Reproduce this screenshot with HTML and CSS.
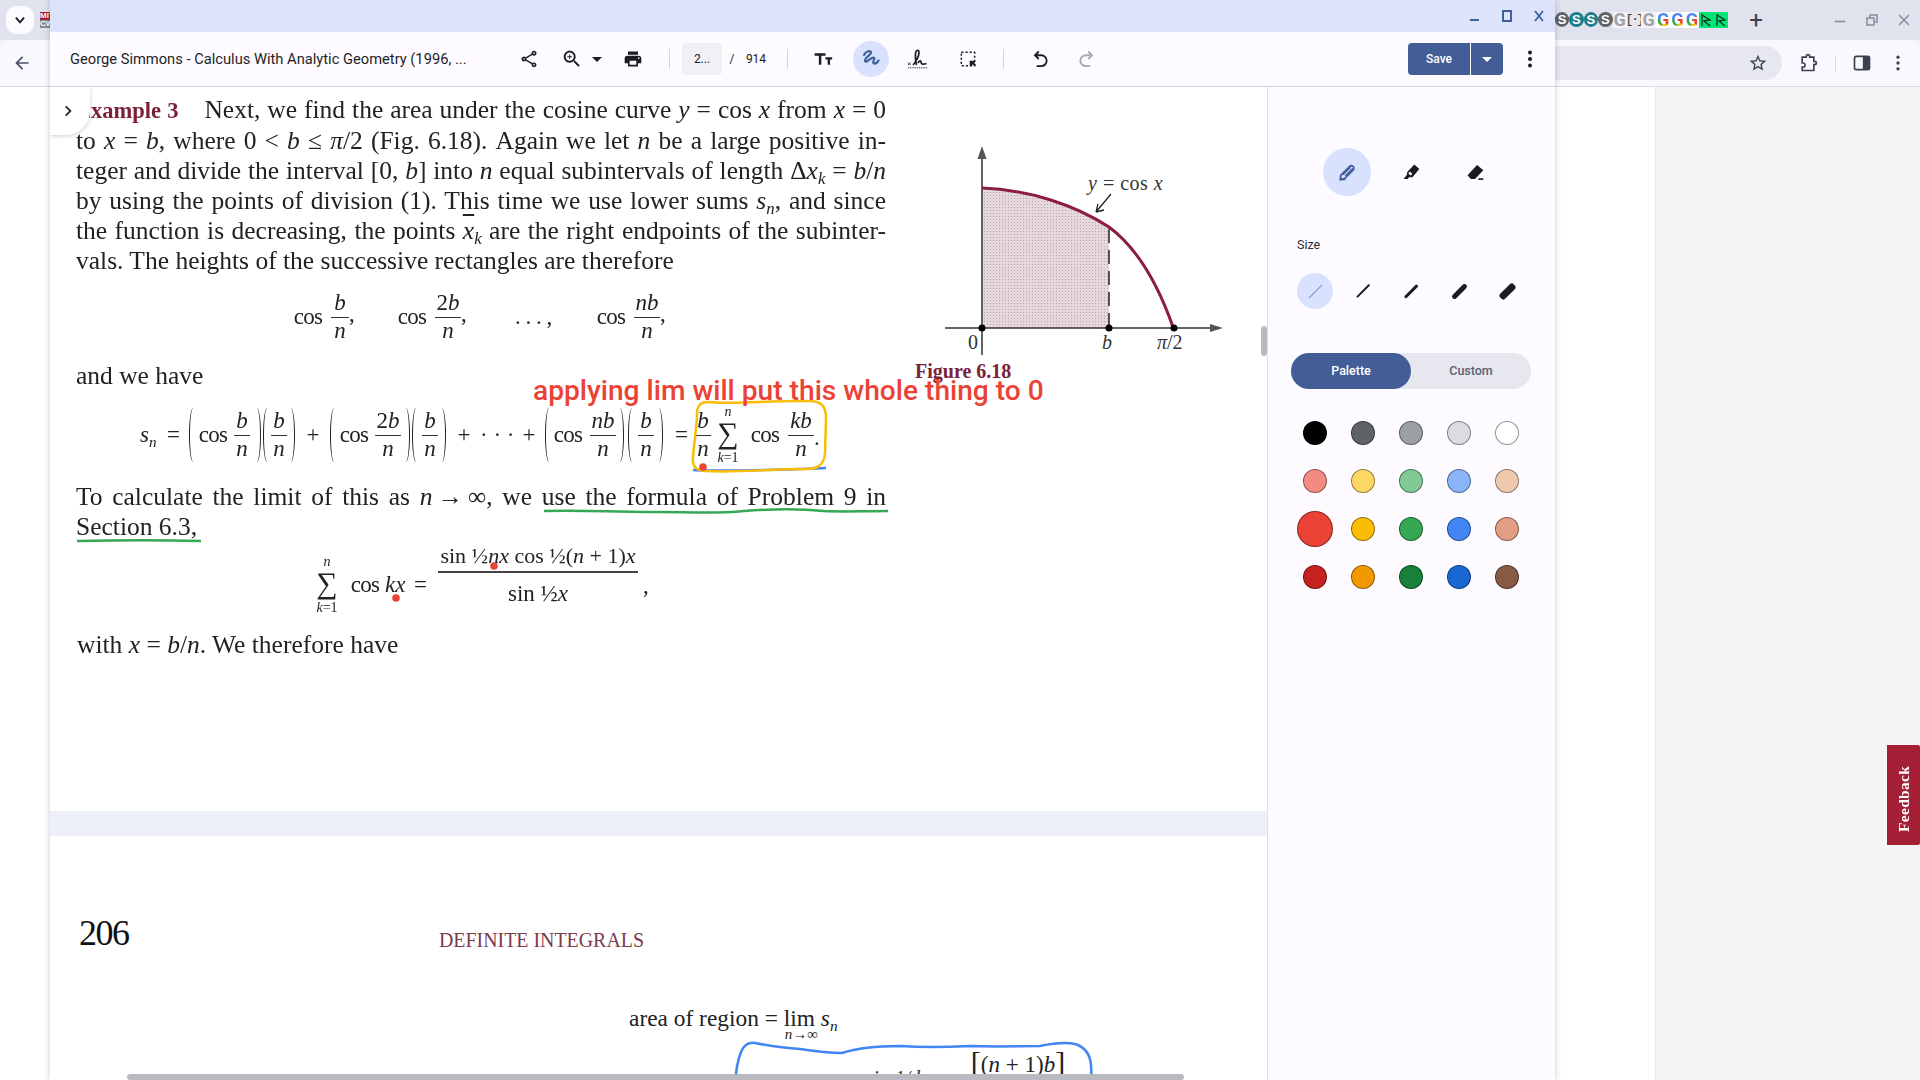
FILE: index.html
```html
<!DOCTYPE html>
<html lang="en">
<head>
<meta charset="utf-8">
<title>Calculus With Analytic Geometry</title>
<link rel="stylesheet" href="styles.css">
</head>
<body>
<div class="browser">
  <header class="tabstrip">
    <div class="tab-search"><svg class="i14" viewBox="0 0 24 24"><path d="M5 8l7 8 7-8" fill="none" stroke="#1f1f2a" stroke-width="3.4"/></svg></div>
    <div class="fav-left"><span class="fav-red">MIT</span><span class="fav-grey">CW</span></div>
    <div class="fill"></div>
    <div class="favs">
      <span class="f f-grey">S</span><span class="f f-grey">S</span><span class="f f-teal">S</span><span class="f f-teal">S</span><span class="f f-grey">S</span>
      <span class="f f-gg">G</span><span class="f f-br">[·}</span><span class="f f-gg">G</span>
      <span class="f f-g">G</span><span class="f f-g">G</span><span class="f f-g">G</span>
      <span class="f f-n">
        <svg class="i14" viewBox="0 0 14 14"><path d="M3 1v12M3 2l8 5-6 1 6 5" fill="none" stroke="#103020" stroke-width="1.3"/></svg>
      </span>
      <span class="f f-n">
        <svg class="i14" viewBox="0 0 14 14"><path d="M3 1v12M3 2l8 5-6 1 6 5" fill="none" stroke="#103020" stroke-width="1.3"/></svg>
      </span>
    </div>
    <div class="new-tab">+</div>
    <div class="win-ctl">
      <svg class="i16" viewBox="0 0 16 16"><path d="M3 9.5h10" stroke="#8a8d9c" stroke-width="1.6"/></svg>
      <svg class="i16" viewBox="0 0 16 16"><path d="M3 6h7v7H3zM6 6V3h7v7h-3" fill="none" stroke="#8a8d9c" stroke-width="1.5"/></svg>
      <svg class="i16" viewBox="0 0 16 16"><path d="M3 3l10 10M13 3L3 13" stroke="#8a8d9c" stroke-width="1.6"/></svg>
    </div>
  </header>
  <div class="chrome-bar">
    <svg class="back" viewBox="0 0 24 24"><path d="M20 11H7.8l5.6-5.6L12 4l-8 8 8 8 1.4-1.4L7.8 13H20z" fill="#4a5068"/></svg>
    <div class="fill"></div>
    <div class="omni">
      <svg class="i20" viewBox="0 0 24 24"><path d="M22 9.24l-7.19-.62L12 2 9.19 8.63 2 9.24l5.46 4.73L5.82 21 12 17.27 18.18 21l-1.63-7.03L22 9.24zM12 15.4l-3.76 2.27 1-4.28-3.32-2.88 4.38-.38L12 6.1l1.71 4.04 4.38.38-3.32 2.88 1 4.28L12 15.4z" fill="#3c4150"/></svg>
    </div>
    <svg class="i20 ext" viewBox="0 0 24 24"><path d="M5 5h5V4a2 2 0 0 1 4 0v1h5v5h1a2 2 0 0 1 0 4h-1v7H5v-4h1a2.500 2.500 0 0 0 0-5H5z" fill="none" stroke="#3c4150" stroke-width="2"/></svg>
    <span class="bar-sep"></span>
    <svg class="i20 side" viewBox="0 0 24 24"><rect x="3" y="4" width="18" height="16" rx="2" fill="none" stroke="#3c4150" stroke-width="2"/><rect x="13" y="4" width="8" height="16" fill="#3c4150"/></svg>
    <svg class="i20 dots" viewBox="0 0 24 24"><circle cx="12" cy="5" r="2" fill="#3c4150"/><circle cx="12" cy="12" r="2" fill="#3c4150"/><circle cx="12" cy="19" r="2" fill="#3c4150"/></svg>
  </div>
  <main class="site">
    <div class="site-white"></div>
    <div class="feedback">Feedback</div>
  </main>
</div>

<section class="window">
  <div class="titlebar">
    <button class="tb-ctl"><svg class="i16" viewBox="0 0 16 16"><path d="M3 12h9" stroke="#41609b" stroke-width="2"/></svg></button>
    <button class="tb-ctl"><svg class="i16" viewBox="0 0 16 16"><path d="M4 3h8v10H4z" fill="none" stroke="#41609b" stroke-width="2"/></svg></button>
    <button class="tb-ctl"><svg class="i16" viewBox="0 0 16 16"><path d="M4 3l8 10M12 3L4 13" stroke="#41609b" stroke-width="1.800"/></svg></button>
  </div>
  <div class="toolbar">
    <div class="doc-title">George Simmons - Calculus With Analytic Geometry (1996, ...</div>
    <button class="ic"><svg class="i20" viewBox="0 0 24 24"><path d="M18 16.080c-.76 0-1.440.3-1.960.77L8.910 12.700c.05-.23.09-.46.09-.7s-.04-.47-.09-.7l7.050-4.110c.54.5 1.250.81 2.040.81 1.660 0 3-1.340 3-3s-1.340-3-3-3-3 1.340-3 3c0 .24.04.47.09.7L8.040 9.810C7.500 9.310 6.790 9 6 9c-1.660 0-3 1.340-3 3s1.340 3 3 3c.79 0 1.500-.31 2.040-.81l7.120 4.160c-.05.21-.08.43-.08.65 0 1.610 1.310 2.920 2.920 2.920 1.610 0 2.920-1.310 2.920-2.920s-1.310-2.920-2.920-2.920zM18 4c.55 0 1 .45 1 1s-.45 1-1 1-1-.45-1-1 .45-1 1-1zM6 13c-.55 0-1-.45-1-1s.45-1 1-1 1 .45 1 1-.45 1-1 1zm12 7.020c-.55 0-1-.45-1-1s.45-1 1-1 1 .45 1 1-.45 1-1 1z" fill="#1d1b20"/></svg></button>
    <button class="ic m7"><svg class="i22" viewBox="0 0 24 24"><path d="M15.500 14h-.79l-.28-.27C15.410 12.590 16 11.110 16 9.500 16 5.910 13.090 3 9.500 3S3 5.910 3 9.500 5.910 16 9.500 16c1.610 0 3.090-.59 4.230-1.570l.27.28v.79l5 4.990L20.490 19l-4.990-5zm-6 0C7.010 14 5 11.990 5 9.500S7.010 5 9.500 5 14 7.010 14 9.500 11.990 14 9.500 14z" fill="#1d1b20"/><path d="M12 10h-2v2H9v-2H7V9h2V7h1v2h2z" fill="#1d1b20"/></svg></button>
    <span class="caret"></span>
    <button class="ic m11"><svg class="i20" viewBox="0 0 24 24"><path d="M19 8H5c-1.660 0-3 1.340-3 3v6h4v4h12v-4h4v-6c0-1.660-1.340-3-3-3zm-3 11H8v-5h8v5zm3-7c-.55 0-1-.45-1-1s.45-1 1-1 1 .45 1 1-.45 1-1 1zm-1-9H6v4h12V3z" fill="#1d1b20"/></svg></button>
    <span class="sep m18"></span>
    <div class="page-input m12">2...</div>
    <span class="page-slash m5">/</span>
    <span class="page-total m4">914</span>
    <span class="sep m16"></span>
    <button class="ic m17"><svg class="i20" viewBox="0 0 24 24"><path d="M2 5h13v3h-5v11H7V8H2zM15 10h8v2.500h-2.600V19h-2.800v-6.500H15z" fill="#1d1b20"/></svg></button>
    <button class="ic ink m12"><svg class="i24" viewBox="0 0 24 24"><path d="M5 8c2-4 7-5 7-2.500S5 11 6 14c1 2.500 6-3.500 8.500-3.500 2.500 0-2 5.500.5 6 2 .3 3.500-1 4.500-3" fill="none" stroke="#41609b" stroke-width="2.200" stroke-linecap="round"/></svg></button>
    <button class="ic m11"><svg class="i24" viewBox="0 0 24 24"><path d="M2 15.500l2.600 2.600M4.600 15.500L2 18.100" stroke="#1d1b20" stroke-width=".9"/><path d="M7 18C10 15 13 9 13 5.500c0-2.800-2.800-2.800-3.300 0-.6 3 0 8.500.8 12.500M12 16c1-1.800 3-3.200 3-.8 0 2.300 2.500 2.300 5.500 1.300" fill="none" stroke="#1d1b20" stroke-width="1.700"/><path d="M2 20.800h20" stroke="#1d1b20" stroke-width="1" stroke-dasharray="1.200 1"/></svg></button>
    <button class="ic m14"><svg class="i20" viewBox="0 0 24 24"><path d="M4 4h16v16H4z" fill="none" stroke="#1d1b20" stroke-width="1.800" stroke-dasharray="2.600 2.400"/><path d="M14 14h6.500v2.500l-1.700-.2 2.700 2.700-1.800 1.800-2.700-2.700.2 1.900H14z" fill="#1d1b20"/></svg></button>
    <span class="sep m17"></span>
    <button class="ic m18"><svg class="i20" viewBox="0 0 24 24"><path d="M10.500 3L6 7.500l4.500 4.500M6 7.500h7.500a6 6 0 0 1 0 13H8" fill="none" stroke="#1d1b20" stroke-width="2.200"/></svg></button>
    <button class="ic m11"><svg class="i20" viewBox="0 0 24 24"><path d="M13.500 3L18 7.500 13.500 12M18 7.500h-7.500a6 6 0 0 0 0 13H16" fill="none" stroke="#a9a9ae" stroke-width="2.200"/></svg></button>
    <div class="fill"></div>
    <div class="save">Save</div>
    <div class="save-arrow"><span class="caret caret-w"></span></div>
    <button class="ic m9"><svg class="i24" viewBox="0 0 24 24"><circle cx="12" cy="5.500" r="2" fill="#1d1b20"/><circle cx="12" cy="12" r="2" fill="#1d1b20"/><circle cx="12" cy="18.500" r="2" fill="#1d1b20"/></svg></button>
  </div>

  <div class="main">
    <div class="viewer">
      <article class="page one">
        <div class="para p-a">
          <div class="j"><b class="ex">Example 3</b>Next, we find the area under the cosine curve <i>y</i> = cos <i>x</i> from <i>x</i> = 0</div>
          <div class="j">to <i>x</i> = <i>b</i>, where 0 &lt; <i>b</i> ≤ <i>π</i>/2 (Fig. 6.18). Again we let <i>n</i> be a large positive in-</div>
          <div class="j">teger and divide the interval [0, <i>b</i>] into <i>n</i> equal subintervals of length Δ<i>x<sub>k</sub></i> = <i>b</i>/<i>n</i></div>
          <div class="j">by using the points of division (1). This time we use lower sums <i>s<sub>n</sub></i>, and since</div>
          <div class="j">the function is decreasing, the points <i class="over">x</i><i><sub>k</sub></i> are the right endpoints of the subinter-</div>
          <div>vals. The heights of the successive rectangles are therefore</div>
        </div>

        <div class="eq eq-cos">
          <span class="cos">cos</span><span class="fr m8"><i>b</i><i>n</i></span><span class="punct">,</span>
          <span class="cos m42">cos</span><span class="fr fr2 m8"><i><span class="up">2</span>b</i><i>n</i></span><span class="punct">,</span>
          <span class="ell m48">. . . ,</span>
          <span class="cos m47">cos</span><span class="fr fr2 m8"><i>nb</i><i>n</i></span><span class="punct">,</span>
        </div>

        <div class="para p-b">and we have</div>

        <div class="eq eq-sum">
          <i class="sn">s<sub>n</sub></i>
          <span class="op m10">=</span>
          <span class="lp m10"></span>
          <span class="cos m1">cos</span>
          <span class="fr m6"><i>b</i><i>n</i></span>
          <span class="rp m3"></span><span class="lp m2"></span>
          <span class="fr"><i>b</i><i>n</i></span>
          <span class="rp"></span>
          <span class="op plus m11">+</span>
          <span class="lp m10"></span>
          <span class="cos m1">cos</span>
          <span class="fr fr2 m6"><i><span class="up">2</span>b</i><i>n</i></span>
          <span class="rp m1"></span><span class="lp m2"></span>
          <span class="fr m2"><i>b</i><i>n</i></span>
          <span class="rp"></span>
          <span class="op plus m11">+</span>
          <span class="dots3 m9">· · ·</span>
          <span class="op plus m8">+</span>
          <span class="lp m9"></span>
          <span class="cos">cos</span>
          <span class="fr fr2 m7"><i>nb</i><i>n</i></span>
          <span class="rp"></span><span class="lp m4"></span>
          <span class="fr m2"><i>b</i><i>n</i></span>
          <span class="rp m1"></span>
          <span class="op m12">=</span>
          <span class="fr m8"><i>b</i><i>n</i></span>
          <span class="sum m4"><i>n</i><b>∑</b><i><em>k</em>=1</i></span>
          <span class="cos m9">cos</span>
          <span class="fr fr2 m8"><i>kb</i><i>n</i></span>
          <span class="punct">.</span>
        </div>

        <div class="para p-c">
          <div class="j">To calculate the limit of this as <i>n</i>&thinsp;→&thinsp;∞, we use the formula of Problem 9 in</div>
          <div>Section 6.3,</div>
        </div>

        <div class="eq eq-lim">
          <span class="sum sum-l"><i>n</i><b>∑</b><i><em>k</em>=1</i></span>
          <span class="cos m8">cos</span>
          <i class="kx m5">kx</i>
          <span class="op m9">=</span>
          <span class="big-frac m12"><span class="bf-n">sin ½<i>nx</i> cos ½(<i>n</i> + 1)<i>x</i></span><span class="bf-d">sin ½<i>x</i></span></span>
          <span class="punct comma-l m5">,</span>
        </div>

        <div class="para p-d">with <i>x</i> = <i>b</i>/<i>n</i>. We therefore have</div>

        <svg class="figure" viewBox="930 140 300 250">
          <defs>
            <pattern id="stip" width="3" height="3" patternUnits="userSpaceOnUse">
              <rect width="3" height="3" fill="#e6d8dd"/>
              <rect width="1" height="1" fill="#b8a6ad"/>
            </pattern>
          </defs>
          <path d="M982 188C1030 190 1075 205 1109 227V328H982z" fill="url(#stip)"/>
          <path d="M982 150V355M945 328H1215" stroke="#333" stroke-width="1.500" fill="none"/>
          <path d="M982 146l-4.500 13h9zM1223 328l-13-4v8z" fill="#555"/>
          <path d="M1109 229V328" stroke="#222" stroke-width="1.500" stroke-dasharray="14 7"/>
          <path d="M982 188C1030 190 1075 205 1109 227C1140 250 1160 290 1173 327" fill="none" stroke="#8c1d3c" stroke-width="3"/>
          <circle cx="982" cy="328" r="3.500"/><circle cx="1109" cy="328" r="3.500"/><circle cx="1174" cy="328" r="3.500"/>
          <path d="M1111 194L1096 212M1096 212l2-8M1096 212l8-2" stroke="#222" stroke-width="1.300" fill="none"/>
          <text x="1088" y="190" class="fig-t fig-wide"><tspan font-style="italic">y</tspan> = cos <tspan font-style="italic">x</tspan></text>
          <text x="968" y="349" class="fig-t">0</text>
          <text x="1102" y="349" class="fig-t"><tspan font-style="italic">b</tspan></text>
          <text x="1157" y="349" class="fig-t"><tspan font-style="italic">π</tspan>/2</text>
        </svg>
        <div class="fig-cap">Figure 6.18</div>

        <svg class="ink-layer" viewBox="50 87 1217 724">
          <path d="M693 470c10 1 60 1 133-2" fill="none" stroke="#4285f4" stroke-width="2.500"/>
          <path d="M708 402c30 3 60-2 100-1 13 0 18 4 18 18l-1 34c-1 13-8 16-20 16-35 0-70 4-100 2-9-1-13-4-12-14 1-14 4-32 4-43 0-8 3-12 11-12z" fill="none" stroke="#fbbc04" stroke-width="2.500"/>
          <path d="M544 511c50-1 60 1 110 1s60 2 90-1c40-3 60-2 80 0 20 1 40 0 64 0" fill="none" stroke="#34a853" stroke-width="2.500"/>
          <path d="M77 541c40-1 90-1 124 0" fill="none" stroke="#34a853" stroke-width="2.500"/>
          <circle cx="703" cy="467" r="3.800" fill="#ea4335"/>
          <circle cx="494" cy="566" r="3.800" fill="#ea4335"/>
          <circle cx="396" cy="598" r="3.800" fill="#ea4335"/>
        </svg>
        <div class="red-note">applying lim will put this whole thing to 0</div>
      </article>

      <div class="page-gap"></div>

      <article class="page two">
        <div class="pg-num">206</div>
        <div class="pg-head">DEFINITE INTEGRALS</div>
        <div class="area">area of region = <span class="lim">lim<small><i>n</i>→∞</small></span> <i>s<sub>n</sub></i></div>
        <div class="cut-sin">sin ½<i>b</i> cos</div>
        <div class="cut-num"><span class="brk">[</span>(<i>n</i> + 1)<i>b</i><span class="brk">]</span></div>
        <svg class="ink-layer two-ink" viewBox="50 836 1217 244">
          <path d="M736 1085C735 1070 738 1060 741 1052C744 1045 748 1042 755 1043C770 1046 780 1048 800 1049C820 1052 830 1053 842 1053C860 1047 880 1046 900 1046C930 1048 950 1047 970 1046C1000 1047 1020 1046 1040 1046C1055 1043 1065 1042 1075 1044C1085 1047 1090 1054 1091 1065L1092 1085" fill="none" stroke="#4285f4" stroke-width="2.500"/>
        </svg>
      </article>

      <button class="rail-toggle"><svg class="i14" viewBox="0 0 24 24"><path d="M8 4l8 8-8 8" fill="none" stroke="#1d1b20" stroke-width="3"/></svg></button>
      <span class="scroll-v"></span>
      <span class="scroll-h"></span>
    </div>

    <aside class="panel">
      <div class="tools">
        <button class="tool on"><svg class="i20" viewBox="0 0 24 24"><path d="M4 21l.5-5L15 5.500a3 3 0 0 1 4.500 4L9 20zM7 15l9-9M10 17l9-9" fill="none" stroke="#41609b" stroke-width="2.200"/><path d="M4 21h6" stroke="#41609b" stroke-width="2"/></svg></button>
        <button class="tool"><svg class="i20" viewBox="0 0 24 24"><path d="M16 3l6 5.500-8.500 10-3.500-.5-2 2.500H3l4-5 .5-3.500z" fill="#1d1b20"/><path d="M10.500 11.500l3 2.700-1.800 2.100-3-2.600z" fill="#fff"/></svg></button>
        <button class="tool"><svg class="i20" viewBox="0 0 24 24"><path d="M14.500 3.500l7.500 6.500-10 10.500H7l-4-4.500z" fill="#1d1b20"/><path d="M16 20.500h6" stroke="#1d1b20" stroke-width="2"/></svg></button>
      </div>
      <div class="size-label">Size</div>
      <div class="sizes">
        <button class="size on"><span class="stroke s1"></span></button>
        <button class="size"><span class="stroke s2"></span></button>
        <button class="size"><span class="stroke s3"></span></button>
        <button class="size"><span class="stroke s4"></span></button>
        <button class="size"><span class="stroke s5"></span></button>
      </div>
      <div class="seg">
        <div class="seg-on">Palette</div>
        <div class="seg-off">Custom</div>
      </div>
      <div class="palette">
        <span class="c c01"></span><span class="c c02"></span><span class="c c03"></span><span class="c c04"></span><span class="c c05"></span>
        <span class="c c06"></span><span class="c c07"></span><span class="c c08"></span><span class="c c09"></span><span class="c c10"></span>
        <span class="c c11 sel"></span><span class="c c12"></span><span class="c c13"></span><span class="c c14"></span><span class="c c15"></span>
        <span class="c c16"></span><span class="c c17"></span><span class="c c18"></span><span class="c c19"></span><span class="c c20"></span>
      </div>
    </aside>
  </div>
</section>
</body>
</html>
```

FILE: styles.css
```css
* { box-sizing: border-box; }
html, body { margin: 0; height: 100%; overflow: hidden; }
body { width: 1920px; height: 1080px; position: relative; background: #f5f5f5; font-family: Roboto, "Liberation Sans", sans-serif; color: #1d1b20; }
button { border: 0; background: none; padding: 0; margin: 0; display: flex; align-items: center; justify-content: center; }
svg { display: block; }
.i14 { width: 14px; height: 14px; }
.i16 { width: 16px; height: 16px; }
.i20 { width: 20px; height: 20px; }
.i22 { width: 22px; height: 22px; }
.i24 { width: 24px; height: 24px; }
.fill { flex: 1; }

.m1 { margin-left: 1px; } .m2 { margin-left: 2px; } .m3 { margin-left: 3px; } .m4 { margin-left: 4px; }
.m5 { margin-left: 5px; } .m6 { margin-left: 6px; } .m7 { margin-left: 7px; } .m8 { margin-left: 8px; }
.m9 { margin-left: 9px; } .m10 { margin-left: 10px; } .m11 { margin-left: 11px; } .m12 { margin-left: 12px; }
.m14 { margin-left: 14px; } .m16 { margin-left: 16px; } .m17 { margin-left: 17px; } .m18 { margin-left: 18px; }
.m42 { margin-left: 42px; } .m47 { margin-left: 47px; } .m48 { margin-left: 48px; }

/* browser behind */
.browser { height: 1080px; display: flex; flex-direction: column; }
.tabstrip { height: 40px; background: #e0e2ee; display: flex; align-items: center; padding-left: 6px; }
.tab-search { width: 28px; height: 28px; background: #fbfbff; border-radius: 10px; display: flex; align-items: center; justify-content: center; }
.fav-left { width: 16px; height: 16px; margin-left: 6px; display: flex; flex-direction: column; font: bold 8px/8px "Liberation Sans", sans-serif; overflow: hidden; }
.fav-red { background: #a31f34; color: #fff; }
.fav-grey { background: #8a8b8c; color: #fff; }
.favs { display: flex; margin-right: 18px; }
.f { width: 14.450px; height: 16px; display: flex; align-items: center; justify-content: center; font: bold 13px/16px "Liberation Sans", sans-serif; }
.f-grey, .f-teal { border-radius: 50%; color: #fff; height: 15px; }
.f-grey { background: #5f6368; }
.f-teal { background: #1c7f8c; }
.f-gg { background: #f3f4f8; color: #a0a2a6; font: bold 18px/16px Roboto, sans-serif; }
.f-br { background: #e6e7ef; color: #333; font: 13px/16px "Liberation Mono", monospace; letter-spacing: -2px; }
.f-g { font: bold 18px/16px Roboto, sans-serif; color: transparent; background: conic-gradient(from 45deg, #ea4335 0 25%, #fbbc04 25% 40%, #34a853 40% 65%, #4285f4 65% 100%), linear-gradient(#fff, #fff); -webkit-background-clip: text, border-box; background-clip: text, border-box; }
.f-n { background: #00e676; }
.new-tab { width: 20px; text-align: center; font: 24px/24px Roboto, sans-serif; color: #3c4150; margin-right: 66px; }
.win-ctl { display: flex; gap: 16px; margin-right: 8px; }

.chrome-bar { height: 47px; background: #f8f8fe; border-top-left-radius: 14px; border-top-right-radius: 14px; border-bottom: 1px solid #dcdde6; display: flex; align-items: center; padding: 0 12px; }
.back { width: 20px; height: 20px; }
.omni { width: 235px; height: 34px; background: #e6e7f1; border-radius: 0 17px 17px 0; display: flex; align-items: center; justify-content: flex-end; padding-right: 14px; }
.ext { margin-left: 16px; }
.bar-sep { width: 1px; height: 16px; background: #d5dcf0; margin-left: 17px; }
.side { margin-left: 16px; }
.dots { margin-left: 16px; }

.site { flex: 1; display: flex; position: relative; }
.site-white { width: 1656px; background: #fff; border-right: 1px solid #e8e8e8; }
.feedback { position: absolute; right: 0; top: 658px; width: 33px; height: 100px; padding-bottom: 7px; background: #a51f37; color: #fff; border-radius: 2px 0 0 2px; font: bold 15.500px/33px "Liberation Serif", serif; writing-mode: vertical-rl; transform: rotate(180deg); text-align: center; letter-spacing: .3px; }

/* floating PDF window */
.window { position: absolute; left: 50px; top: 0; width: 1505px; height: 1080px; display: flex; flex-direction: column; background: #fdfbff; box-shadow: 0 0 6px rgba(0,0,0,.22); }
.titlebar { height: 32px; background: #dce3fa; display: flex; justify-content: flex-end; flex-shrink: 0; }
.tb-ctl { width: 32px; height: 32px; }
.toolbar { height: 55px; flex-shrink: 0; display: flex; align-items: center; padding: 0 7px 0 20px; background: #fdfbff; border-bottom: 1px solid #d4d4da; }
.doc-title { width: 441px; font-size: 14.700px; line-height: 20px; white-space: nowrap; color: #1f1f26; }
.ic { width: 36px; height: 36px; flex-shrink: 0; }
.ink { background: #d8e2ff; border-radius: 50%; }
.caret { width: 0; height: 0; border-left: 5px solid transparent; border-right: 5px solid transparent; border-top: 5px solid #1d1b20; margin: 0 2px; }
.caret-w { border-top-color: #fff; margin: 0; }
.sep { width: 1px; height: 20px; background: #d4d4da; flex-shrink: 0; }
.page-input { width: 40px; height: 32px; background: #f1f0f6; border-radius: 4px; font-size: 12px; line-height: 32px; text-align: center; }
.page-slash { width: 10px; text-align: center; font-size: 12px; }
.page-total { width: 30px; text-align: center; font-size: 12px; }
.save { width: 62px; height: 32px; background: #435e96; color: #fff; font-size: 12px; font-weight: 500; line-height: 32px; text-align: center; border-radius: 4px 0 0 4px; }
.save-arrow { width: 33px; height: 32px; background: #435e96; border-left: 1px solid #fff; border-radius: 0 4px 4px 0; display: flex; align-items: center; justify-content: center; }

.main { flex: 1; display: flex; min-height: 0; }
.viewer { width: 1217px; position: relative; overflow: hidden; display: flex; flex-direction: column; background: #fff; }
.page { position: relative; background: #fff; flex-shrink: 0; font-family: "Liberation Serif", serif; color: #222; }
.one { height: 724px; }
.two { height: 244px; overflow: hidden; }
.page-gap { height: 25px; flex-shrink: 0; background: #eef0f9; }

.para { position: absolute; font-size: 25.500px; line-height: 30px; left: 26px; width: 810px; filter: blur(.25px); }
.p-a { top: 8px; }
.p-b { top: 274px; }
.p-c { top: 395px; }
.p-d { top: 543px; left: 27px; }
.j { text-align: justify; text-align-last: justify; }
sub { font-size: .66em; line-height: 0; vertical-align: -.3em; }
.ex { color: #7c2238; font-size: 22.500px; margin-right: 26px; }
.over { text-decoration: overline; }
.up { font-style: normal; }

.eq { position: absolute; display: flex; align-items: center; font-size: 23px; line-height: 24px; white-space: nowrap; filter: blur(.25px); }
.eq-cos { left: 243px; top: 197px; height: 66px; }
.eq-sum { left: 90px; top: 318px; height: 60px; }
.eq-lim { left: 262px; top: 456px; height: 84px; }
.cos { width: 30px; text-align: center; letter-spacing: -.8px; }
.fr { width: 18px; display: flex; flex-direction: column; align-items: center; flex-shrink: 0; }
.eq-sum .fr { width: 16px; }
.eq-sum .fr.fr2, .fr2 { width: 26px; }
.fr i { line-height: 26px; height: 26px; display: block; }
.fr i:first-child { border-bottom: 1.500px solid #333; width: 100%; text-align: center; height: 28px; }
.punct { width: 6px; margin-top: 6px; }
.eq-cos .punct { margin-top: -6px; }
.comma-l { margin-top: 2px; }
.ell { width: 34px; letter-spacing: -.5px; }
.sn { width: 17px; }
.op { width: 12px; text-align: center; }
.plus { width: 14px; }
.dots3 { width: 34px; text-align: center; letter-spacing: 0; }
.lp, .rp { width: 8px; height: 54px; flex-shrink: 0; border-radius: 50%; }
.lp { border-left: 1.500px solid #222; }
.rp { border-right: 1.500px solid #222; }
.sum { width: 26px; display: flex; flex-direction: column; align-items: center; font-size: 14px; line-height: 14px; }
.sum b { display: block; height: 30px; font: 400 30px/27px "Liberation Serif", serif; }
.sum em { font-style: italic; }
.sum > i:last-child { font-style: normal; margin-top: 2px; }
.sum-l { width: 30px; }
.kx { width: 20px; }
.big-frac { width: 200px; display: flex; flex-direction: column; align-items: center; }
.bf-n { width: 100%; height: 30px; font-size: 22px; text-align: center; border-bottom: 2px solid #444; line-height: 25px; white-space: nowrap; }
.bf-d { height: 54px; padding-top: 6px; line-height: 30px; }

.figure { position: absolute; left: 880px; top: 53px; width: 300px; height: 250px; }
.fig-t { font: 20px "Liberation Serif", serif; fill: #333; }
.fig-wide { letter-spacing: .5px; }
.fig-cap { position: absolute; left: 865px; top: 273px; font: bold 20px/22px "Liberation Serif", serif; color: #7c2238; }
.ink-layer { position: absolute; left: 0; top: 0; width: 1217px; height: 724px; pointer-events: none; }
.two-ink { height: 244px; }
.red-note { position: absolute; left: 483px; top: 288px; font: 500 28.150px/32px Roboto, sans-serif; color: #ea4335; white-space: nowrap; }

.pg-num { position: absolute; left: 29px; top: 75px; font-size: 36px; line-height: 44px; letter-spacing: -1.500px; color: #111; }
.pg-head { position: absolute; left: 389px; top: 89px; font-size: 19.900px; line-height: 30px; color: #7c3a4c; white-space: nowrap; }
.area { position: absolute; left: 579px; top: 167px; font-size: 23.400px; line-height: 30px; white-space: nowrap; }
.lim { display: inline-block; position: relative; }
.lim small { position: absolute; left: 1px; top: 23px; font-size: 15px; line-height: 16px; white-space: nowrap; }
.cut-sin { position: absolute; left: 815px; top: 228px; font-size: 23px; line-height: 30px; white-space: nowrap; color: #444; }
.cut-num { position: absolute; left: 918px; top: 215px; width: 100px; height: 27px; border-bottom: 2px solid #777; font-size: 23px; line-height: 27px; text-align: center; white-space: nowrap; }
.brk { font-size: 30px; line-height: 0; }

.rail-toggle { position: absolute; left: 0; top: 0; width: 40px; height: 48px; padding-right: 5px; background: #fff; border-bottom-right-radius: 24px; box-shadow: 0 1px 4px rgba(0,0,0,.2); }
.scroll-v { position: absolute; left: 1211px; top: 239px; width: 6px; height: 30px; background: #b9b9c1; border-radius: 3px; }
.scroll-h { position: absolute; left: 77px; bottom: 0; width: 1057px; height: 6px; background: #b9b9c1; border-radius: 3px; }

/* annotation panel */
.panel { width: 288px; border-left: 1px solid #dfdfe4; padding-left: 23px; background: #fdfbff; }
.tools { width: 240px; margin-top: 61px; display: flex; justify-content: center; gap: 16px; }
.tool { width: 48px; height: 48px; border-radius: 50%; }
.tool.on { background: #d8e2ff; }
.size-label { margin: 41px 0 0 6px; font-size: 12.500px; line-height: 16px; color: #2a2a30; }
.sizes { margin-top: 20px; width: 240px; display: grid; grid-template-columns: repeat(5, 48px); justify-items: center; }
.size { width: 36px; height: 36px; border-radius: 50%; }
.size.on { background: #d8e2ff; }
.stroke { display: block; width: 18px; background: #1d1b20; transform: rotate(-45deg); border-radius: 3px; }
.s1 { height: 1px; width: 19px; background: #7f93c0; }
.s2 { height: 1.500px; }
.s3 { height: 2.500px; }
.s4 { height: 5px; width: 19px; }
.s5 { height: 7px; width: 19px; }
.seg { margin-top: 44px; width: 240px; height: 36px; background: #e6e7ef; border-radius: 18px; display: flex; font-size: 12.500px; font-weight: 500; line-height: 36px; text-align: center; }
.seg-on { width: 120px; background: #435e96; color: #fff; border-radius: 18px; }
.seg-off { flex: 1; color: #5c5f73; }
.palette { margin-top: 20px; width: 240px; display: grid; grid-template-columns: repeat(5, 48px); grid-auto-rows: 48px; align-items: center; justify-items: center; }
.c { width: 24px; height: 24px; border-radius: 50%; border: 1px solid rgba(0,0,0,.42); }
.c.sel { width: 36px; height: 36px; }
.c01 { background: #000; } .c02 { background: #5f6368; } .c03 { background: #9aa0a6; } .c04 { background: #dadce0; } .c05 { background: #fff; }
.c06 { background: #f28b82; } .c07 { background: #fdd663; } .c08 { background: #81c995; } .c09 { background: #8ab4f8; } .c10 { background: #eec9ae; }
.c11 { background: #ea4335; } .c12 { background: #fbbc04; } .c13 { background: #34a853; } .c14 { background: #4285f4; } .c15 { background: #e19e82; }
.c16 { background: #c5221f; } .c17 { background: #f29900; } .c18 { background: #188038; } .c19 { background: #1967d2; } .c20 { background: #875a43; }
```
